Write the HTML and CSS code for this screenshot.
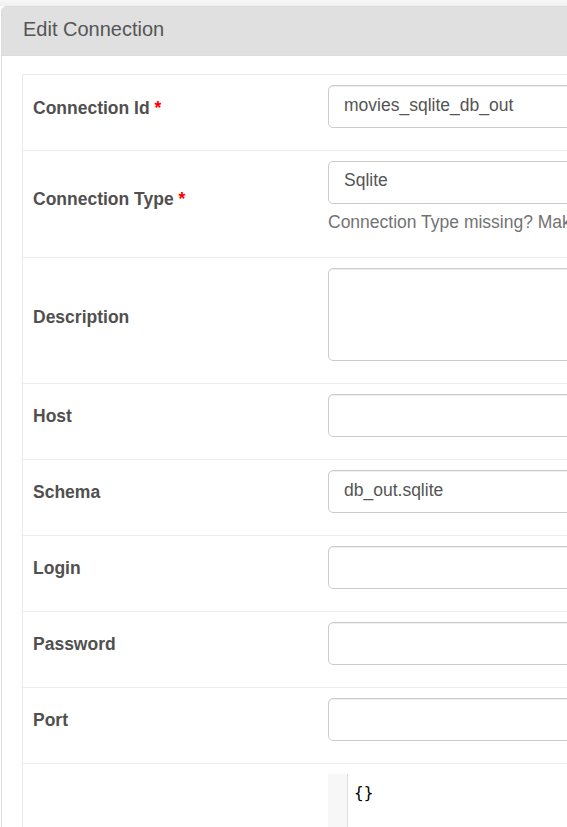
FILE: index.html
```html
<!DOCTYPE html>
<html>
<head>
<meta charset="utf-8">
<link rel="stylesheet" href="styles.css">
</head>
<body>
<div class="topband"></div>
<div class="panel">
  <div class="panel-heading">Edit Connection</div>
  <div class="panel-body">
    <table class="form-table">
      <tr>
        <td class="label-cell"><label>Connection Id <span class="req">*</span></label></td>
        <td class="value-cell"><input class="form-control" type="text" value="movies_sqlite_db_out" readonly></td>
      </tr>
      <tr>
        <td class="label-cell"><label>Connection Type <span class="req">*</span></label></td>
        <td class="value-cell">
          <div class="form-control select-box">Sqlite</div>
          <p class="help-block">Connection Type missing? Make sure you've installed the corresponding Airflow Provider Package.</p>
        </td>
      </tr>
      <tr>
        <td class="label-cell"><label>Description</label></td>
        <td class="value-cell"><textarea class="form-control area" readonly></textarea></td>
      </tr>
      <tr>
        <td class="label-cell"><label>Host</label></td>
        <td class="value-cell"><input class="form-control" type="text" value="" readonly></td>
      </tr>
      <tr>
        <td class="label-cell"><label>Schema</label></td>
        <td class="value-cell"><input class="form-control" type="text" value="db_out.sqlite" readonly></td>
      </tr>
      <tr>
        <td class="label-cell"><label>Login</label></td>
        <td class="value-cell"><input class="form-control" type="text" value="" readonly></td>
      </tr>
      <tr>
        <td class="label-cell"><label>Password</label></td>
        <td class="value-cell"><input class="form-control" type="password" value="" readonly></td>
      </tr>
      <tr>
        <td class="label-cell"><label>Port</label></td>
        <td class="value-cell"><input class="form-control" type="text" value="" readonly></td>
      </tr>
      <tr>
        <td class="label-cell"></td>
        <td class="value-cell">
          <div class="code-editor">
            <div class="gutter"></div>
            <div class="code-lines"><div class="code-line">{}</div></div>
          </div>
        </td>
      </tr>
    </table>
  </div>
</div>
</body>
</html>
```

FILE: styles.css
```css
html, body {
  margin: 0;
  padding: 0;
  overflow: hidden;
  background: #ffffff;
}
body {
  font-family: "Liberation Sans", Arial, sans-serif;
  font-size: 17.5px;
  line-height: 25px;
  color: #51504f;
  width: 1200px;
}
.topband {
  height: 6px;
  background: linear-gradient(#f7f7f7, #efefef);
}
.panel {
  margin-left: 1px;
  border: 1px solid #dcdcdc;
  border-radius: 5px 0 0 0;
  background: #fff;
}
.panel-heading {
  background: #e0e0e0;
  color: #555;
  font-size: 20px;
  line-height: 22px;
  padding: 11px 20px 15px 21px;
  border-bottom: 1px solid #dcdcdc;
  border-radius: 4px 0 0 0;
}
.panel-body {
  padding: 18px 0 0 20px;
}
.form-table {
  border-collapse: collapse;
  width: 1100px;
  border-left: 1px solid #ebebeb;
}
.form-table td {
  border-top: 1px solid #ebebeb;
  border-bottom: 1px solid #ebebeb;
  vertical-align: middle;
}
.label-cell {
  width: 275px;
  padding: 10px;
}
.value-cell {
  padding: 10px 10px 22.5px 10px;
}
.label-cell label {
  display: inline-block;
  font-weight: bold;
  margin-bottom: 10px;
  color: #51504f;
}
.form-table tr:nth-child(-n+2) .label-cell label {
  margin-bottom: 8px;
}
.form-table tr:nth-child(3) .label-cell label {
  margin-bottom: 6px;
}
.req {
  color: #ff0000;
  font-weight: bold;
}
.form-control {
  display: block;
  box-sizing: border-box;
  width: 100%;
  height: 42.5px;
  padding: 7px 15px 8px 15px;
  font-family: "Liberation Sans", Arial, sans-serif;
  font-size: 17.5px;
  line-height: 25px;
  color: #555;
  background: #fff;
  border: 1px solid #cccccc;
  border-radius: 5px;
  box-shadow: inset 0 1px 1px rgba(0,0,0,0.075);
  outline: none;
  margin: 0;
}
.select-box {
  box-shadow: none;
  padding-top: 6px;
}
.area {
  height: 93px;
  resize: none;
}
.help-block {
  margin: 6px 0 0 0;
  color: #737373;
  white-space: nowrap;
}
.form-table tr:nth-child(2) td.value-cell {
  padding-bottom: 22px;
}
.form-table tr:last-child td.value-cell {
  padding-bottom: 40px;
}
.code-editor {
  display: flex;
  height: 80px;
}
.gutter {
  width: 19px;
  background: #f7f7f7;
  border-right: 1px solid #dddddd;
}
.code-lines {
  padding: 9px 0 0 6px;
}
.code-line {
  font-family: "DejaVu Sans Mono", "Liberation Mono", monospace;
  font-size: 16px;
  line-height: 20px;
  color: #000;
}
```
